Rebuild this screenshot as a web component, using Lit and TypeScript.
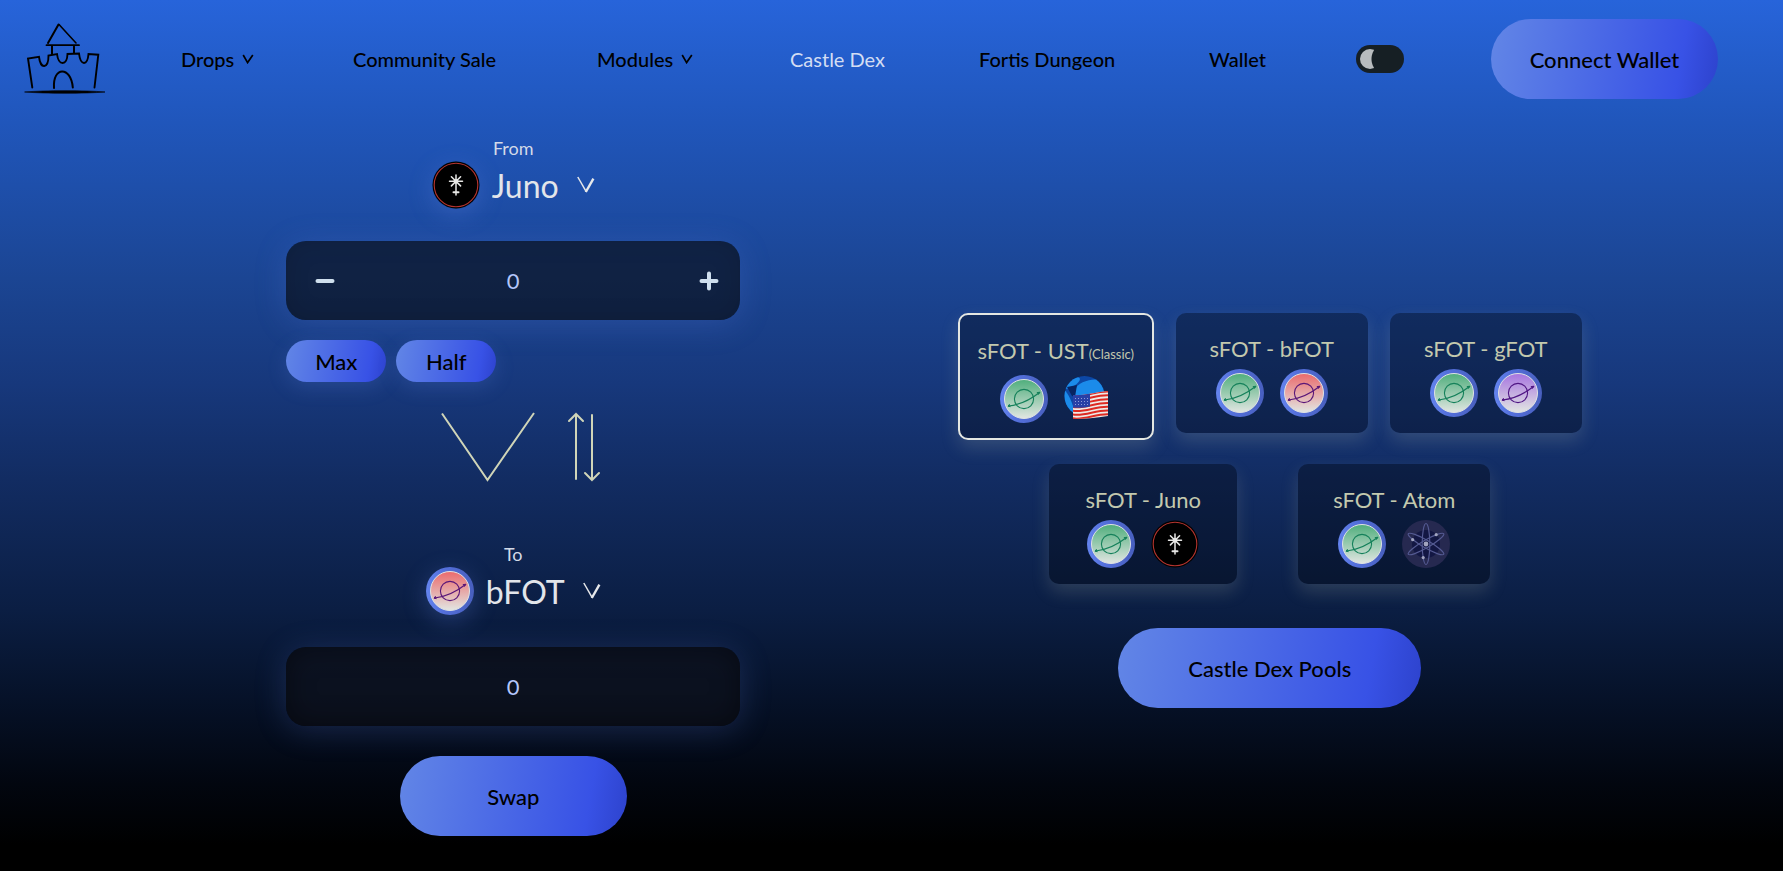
import { LitElement, html, css, svg } from "lit";
import { customElement, property, state } from "lit/decorators.js";
import { classMap } from "lit/directives/class-map.js";

type Coin = "sFOT" | "bFOT" | "gFOT" | "UST" | "Juno" | "Atom";

const planetColors: Record<string, { top: string; line: string }> = {
  sFOT: { top: "#4fae7c", line: "#14805a" },
  bFOT: { top: "#ea6a6c", line: "#5a1678" },
  gFOT: { top: "#a774e0", line: "#4f1583" },
};

@customElement("coin-icon")
export class CoinIcon extends LitElement {
  @property() coin: Coin = "sFOT";

  static styles = css`
    :host {
      display: block;
      width: 48px;
      height: 48px;
      flex: none;
    }
    .icon {
      display: block;
      width: 100%;
      height: 100%;
    }
  `;

  private planet() {
    const { top, line } = planetColors[this.coin];
    return svg`
      <defs>
        <linearGradient id="ring"><stop offset="0" stop-color="#6484ee"/><stop offset=".35" stop-color="#5470dc"/><stop offset="1" stop-color="#485fbe"/></linearGradient>
        <linearGradient id="face" x2="0" y2="1"><stop offset="0" stop-color=${top}/><stop offset="1" stop-color="#e2e6e2"/></linearGradient>
      </defs>
      <circle cx="24" cy="24" r="24" fill="url(#ring)"/>
      <circle cx="24" cy="24" r="19.5" fill="url(#face)" stroke="#dfe2e4"/>
      <g fill="none" stroke=${line} stroke-linecap="round">
        <circle cx="24" cy="24" r="9.6" stroke-width="1.1"/>
        <path d="M8.5 31C18 30 30 25 39.5 17.5" stroke-width="1.1"/>
        <path d="M9.4 29.4L8 31.2L10.2 31.6M37.2 17.6L40 17.2L38.4 19.4" stroke-width="1" fill=${line}/>
      </g>`;
  }

  private juno() {
    return svg`
      <circle cx="24" cy="24" r="23.5" fill="#000"/>
      <circle cx="24" cy="24" r="21.8" fill="none" stroke="#b4342f" stroke-width="1.1"/>
      <g stroke="#e8e8e6" stroke-width="1.5" stroke-linecap="round">
        <path d="M24 14V34M17.5 20.3H30.5M19.4 15.7L28.6 24.9M28.6 15.7L19.4 24.9"/>
        <path d="M21.5 31.2H26.5" stroke-width="2"/>
      </g>
      <circle cx="24" cy="20.3" r="2.4" fill="#e8e8e6"/>`;
  }

  private atom() {
    return svg`
      <circle cx="24" cy="24" r="24" fill="#262950"/>
      <circle cx="24" cy="24" r="14" fill="#131743"/>
      <g fill="none" stroke="#545a92" stroke-width="1.2">
        <ellipse cx="24" cy="24" rx="3.8" ry="20.5"/>
        <ellipse cx="24" cy="24" rx="3.8" ry="20.5" transform="rotate(60 24 24)"/>
        <ellipse cx="24" cy="24" rx="3.8" ry="20.5" transform="rotate(-60 24 24)"/>
      </g>
      <g fill="#a2a5c0">
        <circle cx="24" cy="24" r="2.4"/>
        <circle cx="10.7" cy="19.7" r="1.6"/>
        <circle cx="34.2" cy="14.7" r="1.6"/>
        <circle cx="21.2" cy="37.6" r="1.6"/>
      </g>`;
  }

  private ust() {
    const stripes = [0, 1, 2, 3, 4, 5, 6];
    return svg`
      <defs>
        <clipPath id="globe"><circle cx="20.5" cy="21" r="20"/></clipPath>
        <clipPath id="flag"><path d="M9 20C20 21 32 17 44 16V41C32 43 20 44 9 44Z"/></clipPath>
      </defs>
      <g clip-path="url(#globe)">
        <rect width="44" height="44" fill="#0c47a5"/>
        <ellipse cx="27" cy="15" rx="17" ry="10" transform="rotate(-12 27 15)" fill="#1b8bea"/>
        <ellipse cx="8" cy="8" rx="9" ry="3.6" transform="rotate(-32 8 8)" fill="#1b8bea"/>
        <path d="M-1 14C4 17 8 26 12 41L-2 40Z" fill="#1b8bea"/>
        <path d="M3 12L13 10L11 22L8 21Z" fill="#072461"/>
      </g>
      <g clip-path="url(#flag)">
        <rect x="8" y="14" width="38" height="32" fill="#eee9e6"/>
        ${stripes.map(
          (i) => svg`<path d=${`M8 ${20.4 + i * 3.8}C20 ${23 + i * 3.8} 32 ${15.6 + i * 3.8} 45 ${16.6 + i * 3.8}`} fill="none" stroke="#dd2a22" stroke-width="2"/>`
        )}
        <path d="M8 18L26 17V31.5C20 33 14 33 8 32.5Z" fill="#2840a6"/>
        <path d="M11 23.5H25M11 26.5H25M11 29.5H25" stroke="#8f9cd8" stroke-width="1" stroke-dasharray="1 2"/>
      </g>`;
  }

  render() {
    const body =
      this.coin === "Juno" ? this.juno() : this.coin === "Atom" ? this.atom() : this.coin === "UST" ? this.ust() : this.planet();
    return html`<svg class="icon" viewBox="0 0 48 48" role="img" aria-label=${this.coin}>${body}</svg>`;
  }
}

@customElement("app-root")
export class AppRoot extends LitElement {
  @state() private selected = 0;
  @state() private amount = 0;

  private pairs: { coin: Coin; note?: string }[] = [
    { coin: "UST", note: "(Classic)" },
    { coin: "bFOT" },
    { coin: "gFOT" },
    { coin: "Juno" },
    { coin: "Atom" },
  ];

  static styles = css`
    :host {
      display: block;
      min-height: 100vh;
      box-sizing: border-box;
      font-family: Lato, "Open Sans", sans-serif;
      font-size: 20px;
      color: #000;
      background: linear-gradient(
        #2764da 0%,
        #2056bb 14%,
        #1b4593 32%,
        #17387c 44%,
        #122c62 55%,
        #0b1e43 70%,
        #061229 80%,
        #02060f 90%,
        #000 97%
      );
    }
    * {
      box-sizing: border-box;
    }
    button,
    input,
    select {
      font: inherit;
      color: inherit;
      margin: 0;
      padding: 0;
      border: 0;
      background: none;
    }
    button,
    select {
      cursor: pointer;
    }
    a {
      color: inherit;
      text-decoration: none;
    }
    .bar {
      display: grid;
      grid-template-columns: 157fr 172fr 244fr 193fr 189fr 230fr 147fr 135fr 227px 41fr;
      align-items: center;
      padding: 19px 24px 0;
      font-weight: 500;
    }
    .logo {
      display: block;
      width: 84px;
      height: 76px;
    }
    .item {
      display: flex;
      align-items: center;
      gap: 8px;
      justify-self: start;
      white-space: nowrap;
    }
    .item.active {
      color: #d3ddf3;
      font-weight: 400;
    }
    .caret {
      width: 12px;
      height: 10px;
    }
    .toggle {
      appearance: none;
      display: block;
      width: 48px;
      height: 28px;
      padding: 4px;
      border-radius: 14px;
      background: #161f24;
      cursor: pointer;
    }
    .toggle::before {
      content: "";
      display: block;
      width: 20px;
      height: 20px;
      border-radius: 50%;
      background: radial-gradient(circle at 28px 10px, #161f24 16px, #b8bcbe 17px);
    }
    .pill {
      height: 80px;
      border-radius: 40px;
      font-size: 22px;
      font-weight: 500;
      white-space: nowrap;
      background: linear-gradient(100deg, #6286e6 0%, #3852e6 82%, #2d42cc 100%);
    }
    .pill.regular {
      width: 227px;
    }
    .pill.wide {
      width: 303px;
      margin-top: 22px;
    }
    .pill.small {
      width: 100px;
      height: 42px;
      box-shadow: 0 6px 20px rgba(98, 134, 230, 0.2);
    }
    .content {
      display: grid;
      grid-template-columns: 1fr 1fr;
      padding: 36px 135px 35px;
    }
    .swap {
      display: flex;
      flex-direction: column;
      align-items: center;
      width: 60%;
      margin: 0 auto;
    }
    .caption {
      font-size: 18px;
      line-height: 26px;
      color: #d3dae8;
    }
    .token {
      display: flex;
      align-items: center;
      gap: 12px;
      height: 48px;
      font-size: 32px;
      color: #e2e5ea;
    }
    .token-icon {
      border-radius: 50%;
      box-shadow: 0 6px 24px rgba(98, 134, 230, 0.3);
    }
    .token-select {
      appearance: none;
      field-sizing: content;
      height: 48px;
      outline: none;
    }
    .token-caret {
      width: 18px;
      height: 18px;
      margin-left: 6px;
    }
    .amount {
      display: flex;
      align-items: center;
      justify-content: space-between;
      width: 100%;
      height: 79px;
      margin-top: 32px;
      padding: 0 19px 0 27px;
      border-radius: 20px;
      background: rgba(9, 9, 8, 0.58);
      box-shadow: 0 4px 32px rgba(98, 134, 230, 0.22), inset 0 0 24px rgba(0, 0, 0, 0.14);
    }
    .amount.result {
      padding: 0;
      background: rgba(14, 17, 26, 0.72);
      box-shadow: 0 4px 32px rgba(98, 134, 230, 0.22), inset 0 0 28px rgba(0, 0, 0, 0.45);
    }
    .amount-input {
      flex: 1;
      min-width: 0;
      height: 48px;
      text-align: center;
      font-size: 22px;
      color: #b3c6fa;
      outline: none;
    }
    .amount-input.stepped {
      padding-right: 8px;
    }
    .step {
      display: block;
      width: 24px;
      height: 24px;
    }
    .glyph {
      display: block;
      width: 24px;
      height: 24px;
    }
    .quick {
      display: flex;
      gap: 10px;
      align-self: flex-start;
      margin-top: 20px;
    }
    .direction {
      display: flex;
      align-items: center;
      gap: 32px;
      margin: 30px 0 59px;
      padding-left: 16px;
    }
    .down {
      width: 94px;
      height: 70px;
    }
    .flip {
      display: block;
      width: 34px;
      height: 70px;
    }
    .swap .regular {
      margin-top: 30px;
    }
    .pools {
      display: flex;
      flex-direction: column;
      align-items: center;
      gap: 22px;
      padding-top: 178px;
    }
    .row {
      display: flex;
      align-items: flex-start;
      gap: 22px;
    }
    .row.spread {
      gap: 61px;
    }
    .row.first {
      height: 129px;
    }
    .card {
      display: flex;
      flex-direction: column;
      align-items: center;
      width: 192px;
      height: 120px;
      padding-top: 20px;
      border-radius: 10px;
      color: #c3c9ae;
      font-size: 22px;
      line-height: 32px;
      white-space: nowrap;
      background: rgba(0, 0, 0, 0.32);
      box-shadow: 0 8px 18px rgba(205, 213, 176, 0.17);
    }
    .card.narrow {
      width: 188px;
    }
    .card.selected {
      width: 196px;
      height: 127px;
      border: 2px solid #e4e7e2;
    }
    .note {
      font-size: 13px;
      line-height: 16px;
    }
    .coins {
      display: flex;
      gap: 16px;
      margin-top: 4px;
    }
    .selected .coins {
      margin-top: 8px;
    }
  `;

  private caret() {
    return html`<svg class="caret" viewBox="0 0 12 10" aria-hidden="true">
      <path d="M1.2 1L5.6 8.6L10.8 1" fill="none" stroke="#000" stroke-width="1.7" />
    </svg>`;
  }

  private tokenPicker(id: string, label: string, coin: Coin, coins: Coin[]) {
    return html`
      <label class="caption" for=${id}>${label}</label>
      <div class="token">
        <coin-icon class="token-icon" .coin=${coin}></coin-icon>
        <select class="token-select" id=${id}>
          ${coins.map((c) => html`<option ?selected=${c === coin}>${c}</option>`)}
        </select>
        <svg class="token-caret" viewBox="0 0 18 18" aria-hidden="true">
          <path d="M.8 1L9.2 15.6" stroke="#e6e8ea" stroke-width="1.5" fill="none" />
          <path d="M8.8 16L16.4 2.6" stroke="#e6e8ea" stroke-width="2.4" fill="none" />
        </svg>
      </div>
    `;
  }

  private card(index: number) {
    const { coin, note } = this.pairs[index];
    return html`<button
      class=${classMap({ card: true, selected: this.selected === index, narrow: coin === "Juno" })}
      aria-pressed=${this.selected === index}
      @click=${() => (this.selected = index)}
    >
      <span>sFOT - ${coin}${note ? html`<span class="note">${note}</span>` : ""}</span>
      <span class="coins"><coin-icon coin="sFOT"></coin-icon><coin-icon .coin=${coin}></coin-icon></span>
    </button>`;
  }

  render() {
    return html`
      <nav class="bar">
        <a class="home" href="#" aria-label="Home">
          <svg class="logo" viewBox="24 21 84 76" fill="none" stroke="#000" stroke-width="2" stroke-linecap="round">
            <path d="M48 43L58.5 24.5" />
            <path d="M59 24.5L76 43" stroke-width="1.6" />
            <path d="M46.5 45.2H79" stroke-width="1.8" />
            <path d="M52 46V54M74 46.5V53" />
            <path
              d="M32.3 87.5L28 58.5L39 56.8C40.5 69.5 48.5 69 48.5 55.5L57 54C58.5 66 67 66 67.5 54L79 53.5C80.5 66 87.5 66 88.5 54L98.3 54.7L94.5 87.5"
              stroke-width="1.9"
            />
            <path d="M54 88C52.5 66 71 66 72.8 87.5" />
            <path d="M25 92C45 90.2 85 90.2 105 92C85 93.7 45 93.7 25 92Z" fill="#000" stroke-width=".6" />
          </svg>
        </a>
        <button class="item">Drops ${this.caret()}</button>
        <a class="item" href="#sale">Community Sale</a>
        <button class="item">Modules ${this.caret()}</button>
        <a class="item active" href="#dex" aria-current="page">Castle Dex</a>
        <a class="item" href="#dungeon">Fortis Dungeon</a>
        <a class="item" href="#wallet">Wallet</a>
        <input class="toggle" type="checkbox" aria-label="Dark mode" />
        <button class="pill">Connect Wallet</button>
      </nav>
      <main class="content">
        <section class="swap">
          ${this.tokenPicker("from", "From", "Juno", ["Juno", "sFOT", "bFOT", "gFOT"])}
          <div class="amount">
            <button class="step" aria-label="Decrease" @click=${() => (this.amount = Math.max(0, this.amount - 1))}>
              <svg class="glyph" viewBox="0 0 24 24"><path d="M4.5 12H19.5" stroke="#cfdfee" stroke-width="4" stroke-linecap="round" /></svg>
            </button>
            <input class="amount-input stepped" inputmode="decimal" aria-label="Amount to swap" .value=${String(this.amount)} />
            <button class="step" aria-label="Increase" @click=${() => (this.amount += 1)}>
              <svg class="glyph" viewBox="0 0 24 24"><path d="M4.5 12H19.5M12 4.5V19.5" stroke="#cfdfee" stroke-width="4" stroke-linecap="round" /></svg>
            </button>
          </div>
          <div class="quick">
            <button class="pill small">Max</button>
            <button class="pill small">Half</button>
          </div>
          <div class="direction">
            <svg class="down" viewBox="0 0 94 70" fill="none" stroke="#d0d5b8" stroke-width="2" aria-hidden="true">
              <path d="M1 1.5L46.5 68L93 1" />
            </svg>
            <button class="flip" aria-label="Switch tokens">
              <svg class="flip" viewBox="0 0 34 70" fill="none" stroke="#d0d5b8" stroke-width="2" stroke-linecap="round">
                <path d="M9 2V67M2 9L9 2L16 9M25 3V68M18 61L25 68L32 61" />
              </svg>
            </button>
          </div>
          ${this.tokenPicker("to", "To", "bFOT", ["bFOT", "sFOT", "gFOT", "Juno"])}
          <div class="amount result">
            <input class="amount-input" aria-label="Amount received" readonly value="0" />
          </div>
          <button class="pill regular">Swap</button>
        </section>
        <section class="pools">
          <div class="row first">${[0, 1, 2].map((i) => this.card(i))}</div>
          <div class="row spread">${[3, 4].map((i) => this.card(i))}</div>
          <button class="pill wide">Castle Dex Pools</button>
        </section>
      </main>
    `;
  }
}
